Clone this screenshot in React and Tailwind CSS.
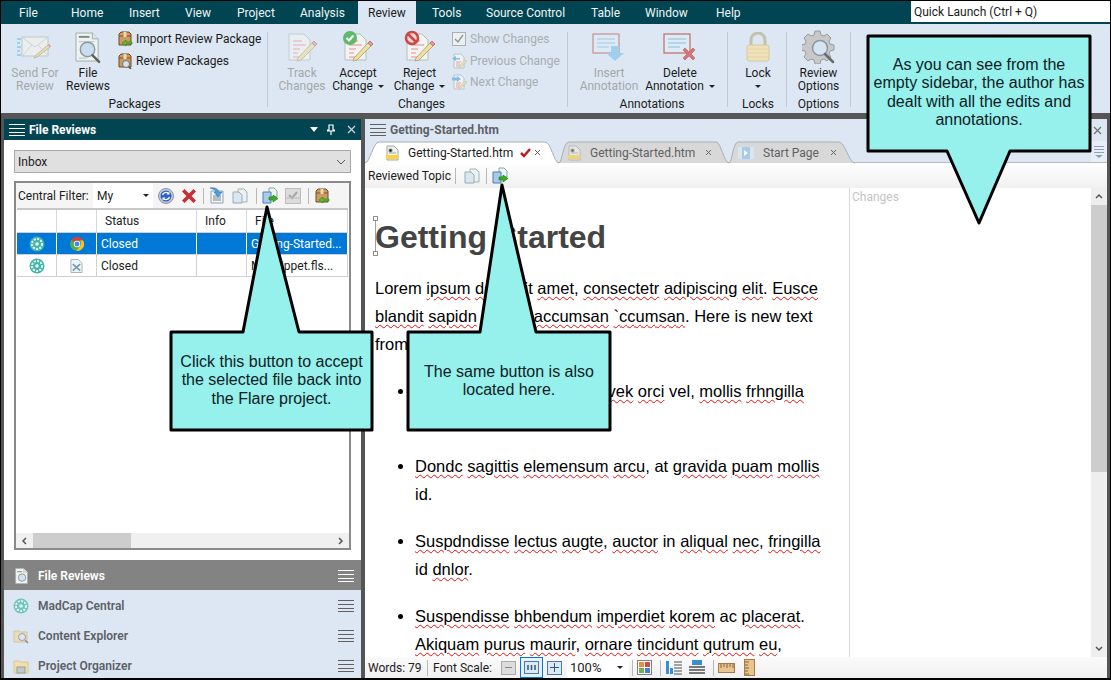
import React from "react";

const Hamburger = ({ color = "#fff", className = "" }) => (
  <svg width="16" height="12" viewBox="0 0 16 12" className={className}>
    <path d="M0 .5h16M0 4.500h16M0 8.500h16M0 11.500h16" stroke={color} strokeWidth="1" />
  </svg>
);

const Envelope = () => (
  <svg width="36" height="30" viewBox="0 0 36 30" className="opacity-80">
    <path d="M0 7h4M0 11h3M0 15h4M0 19h3M0 23h4" stroke="#8ecbee" strokeWidth="2" />
    <rect x="5" y="5" width="26" height="19" fill="#eef2ee" stroke="#b8c0c0" />
    <path d="M5 5l13 10L31 5M5 24l10-11M31 24L21 13" fill="none" stroke="#c8d0d0" />
    <path d="M18 24l13-11 2 2-13 10-3 1z" fill="#eedd9c" stroke="#c0b080" />
    <path d="M31 13l2 2 1-1-2-2z" fill="#e08080" />
  </svg>
);

const PageLines = ({ w = 24, h = 30 }) => (
  <svg width={w} height={h} viewBox="0 0 24 30">
    <path d="M1 1h15l7 7v21H1z" fill="#f2f5f4" stroke="#a8b4b0" />
    <path d="M16 1v7h7" fill="#dce4e2" stroke="#a8b4b0" />
    <path d="M4 7h9" stroke="#808c88" strokeWidth="2" />
    <circle cx="13" cy="18" r="7" fill="#d4e2ee" stroke="#808c88" strokeWidth="1.500" />
  </svg>
);

const FileReviewsIcon = () => (
  <svg width="27" height="33" viewBox="0 0 28 32">
    <path d="M1 1h17l6 6v23H1z" fill="#eef3f1" stroke="#9cacaa" />
    <path d="M18 1v6h6" fill="#dfe6e4" stroke="#9cacaa" />
    <path d="M4 5h11" stroke="#7c8a88" strokeWidth="2" />
    <path d="M4 10h16M4 27h8" stroke="#b4c0be" />
    <circle cx="13" cy="18" r="7.500" fill="#c8dcf2" stroke="#8c9a9c" strokeWidth="1.500" />
    <path d="M18 24l7 7" stroke="#5e5e5e" strokeWidth="2.500" strokeLinecap="round" />
  </svg>
);

const PackageIcon = ({ mode = "import" }) => (
  <svg width="16" height="16" viewBox="0 0 16 16">
    <path d="M2 3l2-2h8l2 2v11H2z" fill="#cd9a62" stroke="#6e4a28" />
    <path d="M2 5h12" stroke="#7e5630" />
    <rect x="6.500" y="1" width="3" height="5" fill="#f0d8a8" />
    {mode === "import" ? (
      <path d="M15 11H9V9l-4 3 4 3v-2h6z" fill="#58c030" stroke="#2d8018" strokeWidth=".6" />
    ) : (
      <>
        <circle cx="9" cy="11" r="3.500" fill="#d4e2ee" stroke="#707070" />
        <path d="M12 14l2 2" stroke="#444" strokeWidth="1.500" />
      </>
    )}
  </svg>
);

// the page-with-pencil that all the Changes buttons share
const EditPage = ({ badge }) => (
  <svg width="34" height="34" viewBox="0 0 34 34">
    <path d="M4 4h15l6 6v20H4z" fill="#f1f4f2" stroke="#b4bebc" />
    <path d="M8 11h9M8 15h13M8 19h7M8 23h5M8 27h6" stroke="#ee8a88" />
    <path d="M13 28l14-15 3 3-14 14-4 1z" fill="#f0e0a0" stroke="#b8aa78" />
    <path d="M27 13l2-2 3 3-2 2z" fill="#e79a98" stroke="#b87a78" />
    {badge === "ok" && (
      <>
        <circle cx="9" cy="8" r="7" fill="#5cba6a" />
        <path d="M5.500 8l2.500 2.500 4.500-5" fill="none" stroke="#fff" strokeWidth="2" />
      </>
    )}
    {badge === "no" && (
      <>
        <circle cx="9" cy="8" r="6" fill="#f4d4d0" stroke="#c84a48" strokeWidth="2.500" />
        <path d="M5 4l8 8" stroke="#c84a48" strokeWidth="2.500" />
      </>
    )}
  </svg>
);

const SmallEdit = ({ arrow }) => (
  <svg width="16" height="16" viewBox="0 0 16 16">
    <path d="M3 1h7l3 3v11H3z" fill="#f2f4f4" stroke="#b8c0c0" />
    <path d="M5 9h5M5 11h4M5 13h3" stroke="#e99" />
    <path d="M8 13l6-6 2 1-6 6-2 1z" fill="#ecdca0" stroke="#bba" strokeWidth=".5" />
    {arrow === "left" ? (
      <path d="M9 5H5V3L1 5.500 5 8V6.500h4z" fill="#7ab8ec" />
    ) : (
      <path d="M1 3.500h5V2l4 3-4 3V6.500H1z" fill="#7ab8ec" />
    )}
  </svg>
);

const AnnotationIcon = ({ del }) => (
  <svg width="34" height="30" viewBox="0 0 34 30">
    <rect x="1" y="2" width="26" height="19" fill="#dcecf6" stroke="#c06a6a" strokeWidth="1.200" />
    <path d="M5 7h18M5 11h18M5 15h12" stroke="#90bcd8" />
    {del ? (
      <path d="M20 18l2-2 4 4 4-4 2 2-4 4 4 4-2 2-4-4-4 4-2-2 4-4z" fill="#d87478" stroke="#b85a5a" strokeWidth=".6" />
    ) : (
      <path d="M19 14h8v7h5l-9 8-9-8h5z" fill="#86c4ec" />
    )}
  </svg>
);

const LockIcon = () => (
  <svg width="24" height="30" viewBox="0 0 24 30">
    <path d="M5 13V8a7 7 0 0 1 14 0v5" fill="none" stroke="#c4c0ae" strokeWidth="3" />
    <rect x="1" y="13" width="22" height="16" rx="2" fill="#f0e2b8" stroke="#d6c89c" />
    <path d="M2 17h20M2 21h20M2 25h20" stroke="#e2d4a6" />
  </svg>
);

const GearIcon = () => (
  <svg width="34" height="34" viewBox="0 0 34 34">
    <path d="M13 1h5l1 4 3 1 3-2 4 4-2 3 1 3 4 1v5l-4 1-1 3 2 3-4 4-3-2-3 1-1 4h-5l-1-4-3-1-3 2-4-4 2-3-1-3-4-1v-5l4-1 1-3-2-3 4-4 3 2 3-1z" fill="#c8c8c8" stroke="#9a9a9a" />
    <circle cx="18" cy="18" r="7.500" fill="#d6e4f2" stroke="#8a96a2" strokeWidth="1.500" />
    <path d="M23 24l8 8" stroke="#6a6a6a" strokeWidth="2.500" strokeLinecap="round" />
  </svg>
);

const CentralIcon = ({ dim }) => (
  <svg width="16" height="16" viewBox="0 0 16 16" className={dim ? "opacity-70" : ""}>
    <circle cx="8" cy="8" r="7.500" fill="#45b5a8" />
    <circle cx="8" cy="8" r="5" fill="none" stroke="#e8fbf6" strokeWidth="2" strokeDasharray="2 1.300" />
    <circle cx="8" cy="8" r="1.800" fill="#e8fbf6" />
  </svg>
);

const ChromeIcon = () => (
  <svg width="14" height="14" viewBox="0 0 14 14">
    <circle cx="7" cy="7" r="7" fill="#4caf50" />
    <path d="M7 0a7 7 0 0 1 6.100 3.500H7a3.500 3.500 0 0 0-3.200 2L1.800 2.300A7 7 0 0 1 7 0z" fill="#e53935" />
    <path d="M13.100 3.500A7 7 0 0 1 6.500 14l3.500-5a3.500 3.500 0 0 0 0-5.500z" fill="#fbc02d" />
    <circle cx="7" cy="7" r="3.200" fill="#fff" />
    <circle cx="7" cy="7" r="2.400" fill="#4285f4" />
  </svg>
);

const SnippetIcon = () => (
  <svg width="13" height="16" viewBox="0 0 14 16">
    <path d="M1 1h8l4 4v10H1z" fill="#eef3f4" stroke="#a4b0b4" />
    <path d="M3 6l8 7M11 6l-8 7" stroke="#6c9ab0" strokeWidth="1.600" />
  </svg>
);

const CopyDocs = ({ dim }) => (
  <svg width="16" height="16" viewBox="0 0 16 16" className={dim ? "opacity-70" : ""}>
    <path d="M6 1h6l3 3v10H6z" fill="#e8f0f2" stroke="#7f979e" />
    <path d="M1 4h6l3 3v8H1z" fill="#d0e2ee" stroke="#6f8e9e" />
  </svg>
);

const AcceptFile = () => (
  <svg width="17" height="17" viewBox="0 0 17 17">
    <path d="M7 1h5l3 3v6H7z" fill="#eef3f4" stroke="#8ea4aa" />
    <path d="M1 5h8v11H1z" fill="#a8cbea" stroke="#4f7eaa" />
    <path d="M7 10h4V8l5 3.500-5 3.500v-2H7z" fill="#38b020" stroke="#1e7a10" strokeWidth=".6" />
  </svg>
);

const Refresh = () => (
  <svg width="16" height="16" viewBox="0 0 16 16">
    <circle cx="8" cy="8" r="7.500" fill="#c8ccd4" stroke="#8c90a0" />
    <circle cx="8" cy="8" r="5.500" fill="#2a62c8" />
    <path d="M4.500 7a3.600 3.600 0 0 1 6-1.500M11.500 9a3.600 3.600 0 0 1-6 1.500" fill="none" stroke="#fff" strokeWidth="1.300" />
    <path d="M11.500 3.500v3h-3zM4.500 12.500v-3h3z" fill="#fff" />
  </svg>
);

const RedX = () => (
  <svg width="14" height="14" viewBox="0 0 14 14">
    <path d="M2.500 0L7 4.500 11.500 0 14 2.500 9.500 7 14 11.500 11.500 14 7 9.500 2.500 14 0 11.500 4.500 7 0 2.500z" fill="#c42e34" />
  </svg>
);

const DownloadDoc = () => (
  <svg width="16" height="17" viewBox="0 0 16 17">
    <path d="M2 4h12v12H2z" fill="#eef3f4" stroke="#8ea4aa" />
    <path d="M4 9h8M4 11h8M4 13h8" stroke="#7c8c92" />
    <path d="M1 1c5-1 8 1 9 4h3l-4 5-4-5h2C7 3 4 2 1 1z" fill="#4f9ade" stroke="#2d6ea8" strokeWidth=".5" />
  </svg>
);

const DisabledCheck = () => (
  <svg width="16" height="16" viewBox="0 0 16 16">
    <rect x=".5" y=".5" width="15" height="15" fill="#dcdcdc" stroke="#bcbcbc" />
    <path d="M4 7l3 3 5-6" fill="none" stroke="#a8a8a8" strokeWidth="2" />
    <path d="M1 10h14" stroke="#bcbcbc" />
  </svg>
);

const TopicIcon = ({ dim }) => (
  <svg width="13" height="16" viewBox="0 0 13 16" className={dim ? "opacity-60" : ""}>
    <path d="M1 1h7l4 4v10H1z" fill="#f0f2f0" stroke="#a0aaa8" />
    <path d="M3 4h3v3H3zM3 8h7" stroke="#a0aaa8" />
    <rect x="0" y="10" width="12" height="4" fill="#fbd23c" />
  </svg>
);

const StartPageIcon = () => (
  <svg width="16" height="12" viewBox="0 0 16 12">
    <rect width="16" height="12" fill="#a6cbe8" />
    <rect x="0" width="4" height="12" fill="#d8e6f2" />
    <rect x="12" width="4" height="12" fill="#d8e6f2" />
    <path d="M6 3l4 3-4 3z" fill="#fff" />
  </svg>
);

const Explorer = () => (
  <svg width="16" height="16" viewBox="0 0 16 16">
    <path d="M1 3h5l1 1h7v10H1z" fill="#ecdcb8" stroke="#d2c4a0" />
    <circle cx="9" cy="9" r="3.500" fill="#dde7f3" stroke="#a0a0a0" />
    <path d="M12 12l3 3" stroke="#909090" strokeWidth="1.500" />
  </svg>
);

const Organizer = () => (
  <svg width="16" height="16" viewBox="0 0 16 16">
    <path d="M1 3h5l1 1h8v11H1z" fill="#f0dfb0" stroke="#d8c890" />
    <rect x="4" y="9" width="8" height="6" fill="#c4c8c8" stroke="#989c9c" />
  </svg>
);

const TabClose = ({ className = "" }) => (
  <svg width="7" height="7" viewBox="0 0 7 7" className={className}><path d="M1 1l5 5M6 1L1 6" stroke="#666" /></svg>
);

const Wv = ({ children }) => (
  <span className="underline decoration-wavy decoration-[#e81010] decoration-1 underline-offset-2">{children}</span>
);

const Dropdown = ({ className = "" }) => <span className={`inline-block h-0 w-0 border-x-[3px] border-t-[3px] border-x-transparent border-t-[#222] ${className}`} />;

function RibbonButton({ icon, lines, width, disabled, caret }) {
  return (
    <div className={`flex shrink-0 flex-col items-center ${width} ${disabled ? "text-[#a3a7ab]" : "text-[#1c1c1c]"}`}>
      <div className="flex h-[43px] items-center justify-center pt-[3px]">{icon}</div>
      {lines.map((line, i) => (
        <div key={i} className="h-[13px] whitespace-nowrap leading-[13px]">
          {line}
          {caret && i === lines.length - 1 && <Dropdown className={line ? "ml-[5px] align-middle" : "align-middle"} />}
        </div>
      ))}
    </div>
  );
}

function RibbonGroup({ label, className = "", children }) {
  return (
    <div className={`flex shrink-0 flex-col ${className}`}>
      <div className="flex h-[69px]">{children}</div>
      <div className="mt-[3px] text-center leading-[16px] text-[#1c1c1c]">{label}</div>
    </div>
  );
}

const RibbonSep = () => <div className="my-[8px] h-[75px] w-px shrink-0 bg-[#bfcad6]" />;
const ToolSep = ({ className = "" }) => <div className={`h-[16px] w-px shrink-0 bg-[#b8b8b8] ${className}`} />;

function SmallAction({ icon, label, disabled }) {
  return (
    <div className={`flex h-[22px] items-center gap-[3px] whitespace-nowrap ${disabled ? "text-[#a3a7ab]" : "text-[#1c1c1c]"}`}>
      <div className="flex w-[16px] justify-center">{icon}</div>
      <span>{label}</span>
    </div>
  );
}

function Callout({ box, path, className, children }) {
  return (
    <div className={`absolute ${box}`}>
      <svg className="absolute left-0 top-0 overflow-visible" width="10" height="10">
        <path d={path} fill="#96f0ec" stroke="#000" strokeWidth="3" strokeLinejoin="round" />
      </svg>
      <div className={`relative flex h-full flex-col items-center text-center font-['Liberation_Sans',sans-serif] text-[16px] leading-[18.4px] text-[#0c1c24] ${className}`}>
        {children}
      </div>
    </div>
  );
}

function GridRow({ selected, icon, status, file }) {
  const cell = `flex items-center border-r ${selected ? "border-white bg-[#0078d7] text-white" : "border-[#d0d0d0] bg-white text-[#1c1c1c]"}`;
  return (
    <div className="flex h-[22px] border-b border-[#d0d0d0]">
      <div className={`${cell} w-[40px] justify-center`}><CentralIcon /></div>
      <div className={`${cell} w-[40px] justify-center`}>{icon}</div>
      <div className={`${cell} w-[100px] pl-[4px]`}>{status}</div>
      <div className={`${cell} w-[50px]`} />
      <div className={`${cell} w-[101px] whitespace-nowrap pl-[4px]`}>{file}</div>
    </div>
  );
}

function NavRow({ icon, label, active }) {
  return (
    <div className={`flex h-[30px] shrink-0 items-center pl-[9px] pr-[7px] pt-[1px] font-semibold ${active ? "bg-[#838383] text-white" : "text-[#5c5f66]"}`}>
      <div className="flex w-[16px] justify-center">{icon}</div>
      <span className="ml-[9px] flex-1">{label}</span>
      <Hamburger color={active ? "#fff" : "#606060"} />
    </div>
  );
}

function DocTab({ shape, fill, icon, label, extra, active, className }) {
  return (
    <div className={`relative flex h-[22px] shrink-0 items-center pt-[1px] ${active ? "text-[#1c1c1c]" : "text-[#606060]"} ${className}`}>
      <svg className="absolute left-0 top-0 overflow-visible" width="10" height="22">
        <path d={shape} fill={fill} stroke="#a8aeb4" />
      </svg>
      <div className="relative flex items-center whitespace-nowrap">
        {icon}
        <span className="ml-[9px]">{label}</span>
        {extra}
      </div>
    </div>
  );
}

export default function App() {
  const tabs = [
    ["File", "ml-[18px] w-[52px]"],
    ["Home", "w-[58px]"],
    ["Insert", "w-[56px]"],
    ["View", "w-[52px]"],
    ["Project", "w-[63px]"],
    ["Analysis", "w-[58px]"],
  ];
  const tabsAfter = [
    ["Tools", "ml-[16px] w-[54px]"],
    ["Source Control", "w-[105px]"],
    ["Table", "w-[54px]"],
    ["Window", "w-[71px]"],
    ["Help", "w-[50px]"],
  ];

  return (
    <div className="relative flex h-[680px] w-[1111px] flex-col overflow-hidden border border-b-2 border-black bg-[#555555] font-['Roboto',sans-serif] text-[12px]">
      {/* menu tabs */}
      <div className="flex h-[23px] shrink-0 items-center bg-[#024552] text-[#eef4f6]">
        {tabs.map(([t, c]) => <div key={t} className={c}>{t}</div>)}
        <div className="flex h-full w-[58px] items-center justify-center bg-[#dde7f3] text-[#1c1c1c]">Review</div>
        {tabsAfter.map(([t, c]) => <div key={t} className={c}>{t}</div>)}
        <div className="ml-auto mb-[2px] flex h-[21px] w-[199px] items-center bg-white pl-[3px] text-[#1c1c1c]">Quick Launch (Ctrl + Q)</div>
      </div>

      {/* ribbon */}
      <div className="flex h-[89px] shrink-0 bg-[#dde7f3] pl-[5px]">
        <RibbonGroup label="Packages" className="w-[257px]">
          <RibbonButton width="w-[58px]" disabled icon={<Envelope />} lines={["Send For", "Review"]} />
          <RibbonButton width="w-[48px]" icon={<FileReviewsIcon />} lines={["File", "Reviews"]} />
          <div className="ml-[5px] mt-[4px] flex flex-col">
            <SmallAction icon={<PackageIcon />} label="Import Review Package" />
            <SmallAction icon={<PackageIcon mode="review" />} label="Review Packages" />
          </div>
        </RibbonGroup>
        <div className="ml-[4px]"><RibbonSep /></div>
        <RibbonGroup label="Changes" className="ml-[8px] w-[291px]">
          <RibbonButton width="w-[52px]" disabled icon={<div className="opacity-60"><EditPage /></div>} lines={["Track", "Changes"]} />
          <RibbonButton width="w-[60px]" icon={<EditPage badge="ok" />} lines={["Accept", "Change"]} caret />
          <RibbonButton width="w-[63px]" icon={<EditPage badge="no" />} lines={["Reject", "Change"]} caret />
          <div className="mt-[4px] flex flex-col opacity-90">
            <SmallAction disabled label="Show Changes" icon={
              <svg width="14" height="14" viewBox="0 0 14 14"><rect x=".5" y=".5" width="13" height="13" fill="#eef1f4" stroke="#a8a8a8" /><path d="M3 7l3 3 5-7" fill="none" stroke="#888" strokeWidth="1.300" /></svg>
            } />
            <SmallAction disabled label="Previous Change" icon={<SmallEdit arrow="left" />} />
            <SmallAction disabled label="Next Change" icon={<SmallEdit arrow="right" />} />
          </div>
        </RibbonGroup>
        <RibbonSep />
        <RibbonGroup label="Annotations" className="ml-[9px] w-[150px]">
          <RibbonButton width="w-[64px]" disabled icon={<div className="opacity-70"><AnnotationIcon /></div>} lines={["Insert", "Annotation"]} />
          <RibbonButton width="w-[78px]" icon={<AnnotationIcon del />} lines={["Delete", "Annotation"]} caret />
        </RibbonGroup>
        <RibbonSep />
        <RibbonGroup label="Locks" className="w-[58px] pl-[2px]">
          <RibbonButton width="w-[56px]" icon={<LockIcon />} lines={["Lock", ""]} caret />
        </RibbonGroup>
        <RibbonSep />
        <RibbonGroup label="Options" className="w-[63px]">
          <RibbonButton width="w-[63px]" icon={<GearIcon />} lines={["Review", "Options"]} />
        </RibbonGroup>
        <RibbonSep />
      </div>

      {/* panels */}
      <div className="flex min-h-0 flex-1 gap-[4px] pl-[3px] pr-[3px] pt-[6px]">
        {/* left panel */}
        <div className="flex w-[357px] shrink-0 flex-col overflow-hidden bg-white">
          <div className="flex h-[21px] shrink-0 items-center bg-[#024552] pl-[5px] pr-[5px] font-bold text-white">
            <Hamburger />
            <span className="ml-[4px] flex-1 text-[12px]">File Reviews</span>
            <span className="h-0 w-0 border-x-[4px] border-t-[5px] border-x-transparent border-t-white" />
            <svg width="8" height="11" viewBox="0 0 8 11" className="ml-[9px]"><path d="M2 1h4v5h1.500v1h-7V6H2zM4 7v4" fill="none" stroke="#fff" strokeWidth="1.200" /></svg>
            <svg width="9" height="9" viewBox="0 0 9 9" className="ml-[12px]"><path d="M1 1l7 7M8 1L1 8" stroke="#c8d4d8" strokeWidth="1.300" /></svg>
          </div>

          <div className="flex h-[420px] shrink-0 flex-col px-[10px] pb-[10px] pt-[10px]">
            <div className="flex h-[23px] shrink-0 items-center justify-between border border-[#a8a8a8] bg-[#e0e0e0] pl-[3px] pr-[4px] text-[#1c1c1c]">
              Inbox
              <svg width="10" height="6" viewBox="0 0 10 6"><path d="M1 1l4 4 4-4" fill="none" stroke="#555" /></svg>
            </div>

            <div className="mt-[8px] flex min-h-0 flex-1 flex-col border-2 border-[#8a8a8a]">
              <div className="flex h-[25px] shrink-0 items-center bg-[#f5f5f5] pl-[2px] text-[#1c1c1c]">
                <span className="w-[75px] whitespace-nowrap">Central Filter:</span>
                <div className="flex h-[25px] w-[60px] items-center justify-between bg-white pl-[4px] pr-[4px]">My<Dropdown /></div>
                <div className="ml-[5px]"><Refresh /></div>
                <div className="ml-[8px]"><RedX /></div>
                <ToolSep className="ml-[7px]" />
                <div className="ml-[5px]"><DownloadDoc /></div>
                <div className="ml-[7px]"><CopyDocs dim /></div>
                <ToolSep className="ml-[8px]" />
                <div className="ml-[5px]"><AcceptFile /></div>
                <div className="ml-[6px]"><DisabledCheck /></div>
                <ToolSep className="ml-[7px]" />
                <div className="ml-[5px]"><PackageIcon /></div>
              </div>
              <div className="mx-[1px] min-h-0 flex-1 border-t-2 border-[#c8c8c8]">
                <div className="flex h-[23px] border-b border-[#d0d0d0] text-[#1c1c1c]">
                  <div className="w-[40px] border-r border-[#d8d8d8]" />
                  <div className="w-[40px] border-r border-[#d8d8d8]" />
                  <div className="flex w-[100px] items-center border-r border-[#d8d8d8] pl-[8px]">Status</div>
                  <div className="flex w-[50px] items-center border-r border-[#d8d8d8] pl-[8px]">Info</div>
                  <div className="flex w-[101px] items-center border-r border-[#d8d8d8] pl-[8px]">File</div>
                </div>
                <GridRow selected icon={<ChromeIcon />} status="Closed" file="Getting-Started..." />
                <GridRow icon={<SnippetIcon />} status="Closed" file="MySnippet.fls..." />
              </div>
              <div className="flex h-[15px] shrink-0 items-center bg-[#f0f0f0] px-[5px]">
                <svg width="6" height="8" viewBox="0 0 6 8"><path d="M5 1L2 4l3 3" fill="none" stroke="#555" strokeWidth="1.500" /></svg>
                <div className="ml-[6px] h-full w-[98px] bg-[#cdcdcd]" />
                <svg width="6" height="8" viewBox="0 0 6 8" className="ml-auto"><path d="M1 1l3 3-3 3" fill="none" stroke="#555" strokeWidth="1.500" /></svg>
              </div>
            </div>
          </div>

          <div className="shrink-0 bg-[#dde7f3]">
            <NavRow active label="File Reviews" icon={<PageLines w={13} h={16} />} />
            <NavRow label="MadCap Central" icon={<CentralIcon dim />} />
            <NavRow label="Content Explorer" icon={<Explorer />} />
            <NavRow label="Project Organizer" icon={<Organizer />} />
          </div>
        </div>

        {/* right panel */}
        <div className="flex min-w-0 flex-1 flex-col bg-white">
          <div className="flex h-[22px] shrink-0 items-center bg-[#dde7f3] pl-[5px] font-bold text-[#5c5f66]">
            <Hamburger color="#606060" />
            <span className="ml-[4px]">Getting-Started.htm</span>
            <svg width="9" height="9" viewBox="0 0 9 9" className="ml-auto mr-[5px]"><path d="M1 1l7 7M8 1L1 8" stroke="#707070" strokeWidth="1.200" /></svg>
          </div>
          <div className="flex h-[22px] shrink-0 border-b border-[#b8bcc0] bg-[#dde7f3]">
            <DocTab active className="w-[194px] pl-[21px]" fill="#fff"
              shape="M0 22C5 22 8 1 14 1H180C186 1 189 22 194 22"
              icon={<TopicIcon />} label="Getting-Started.htm"
              extra={<>
                <svg width="11" height="10" viewBox="0 0 11 10" className="ml-[7px]"><path d="M1 5l3 3 6-7" fill="none" stroke="#b81c24" strokeWidth="2.500" /></svg>
                <TabClose className="ml-[3px]" />
              </>} />
            <DocTab className="w-[170px] pl-[9px]" fill="#d8d8d8"
              shape="M0 22C3 22 4 1 10 1H157C162 1 165 22 170 22"
              icon={<TopicIcon dim />} label="Getting-Started.htm"
              extra={<TabClose className="ml-[10px]" />} />
            <DocTab className="w-[126px] pl-[9px]" fill="#d8d8d8"
              shape="M0 22C3 22 4 1 9 1H110C116 1 120 22 126 22"
              icon={<StartPageIcon />} label="Start Page"
              extra={<TabClose className="ml-[11px]" />} />
            <div className="ml-auto flex w-[16px] flex-col items-center justify-center gap-[2px] bg-[#e8eef6]">
              <div className="h-px w-[10px] bg-[#8ca0b8]" />
              <div className="h-px w-[10px] bg-[#8ca0b8]" />
              <div className="h-px w-[10px] bg-[#8ca0b8]" />
              <div className="h-0 w-0 border-x-[4px] border-t-[3px] border-x-transparent border-t-[#8ca0b8]" />
            </div>
          </div>
          <div className="flex h-[25px] shrink-0 items-center bg-gradient-to-b from-white to-[#f0f0f0] pl-[3px] text-[#1c1c1c]">
            <span className="w-[82px] shrink-0 whitespace-nowrap">Reviewed Topic</span>
            <ToolSep className="ml-[5px]" />
            <div className="ml-[8px]"><CopyDocs dim /></div>
            <ToolSep className="ml-[6px]" />
            <div className="ml-[5px]"><AcceptFile /></div>
          </div>

          <div className="flex min-h-0 flex-1">
            <div className="w-[485px] shrink-0 overflow-hidden border-r border-[#d8d8d8] pl-[10px] pr-[15px] pt-[28px] font-['Liberation_Sans',sans-serif] text-[16.5px] leading-[28px] text-black">
              <h1 className="relative mb-[16px] text-[32px] font-bold leading-[42px] text-[#444444]">
                <span className="absolute left-0 top-[2px] h-[36px] w-px bg-[#a0a0a0]" />
                <span className="absolute left-[-2px] top-0 h-[5px] w-[5px] border border-[#909090] bg-white" />
                <span className="absolute bottom-[2px] left-[-2px] h-[5px] w-[5px] border border-[#909090] bg-white" />
                Getting Started
              </h1>
              <p>
                Lorem <Wv>ipsum</Wv> <Wv>dolor</Wv> sit <Wv>amet</Wv>, <Wv>consectetr</Wv> <Wv>adipiscing</Wv> <Wv>elit</Wv>. <Wv>Eusce</Wv>{" "}
                <Wv>blandit</Wv> <Wv>sapidn</Wv> sed sit <Wv>accumsan</Wv> <Wv>`ccumsan</Wv>. Here is new text from Lorem.
              </p>
              <ul className="mt-[19px] list-disc pl-[40px]">
                <li className="mb-[19px]">Curabitur finibus lorem ac <Wv>vek</Wv> <Wv>orci</Wv> vel, <Wv>mollis</Wv> <Wv>frhngilla</Wv><br />nisi.</li>
                <li className="mb-[19px]"><Wv>Dondc</Wv> <Wv>sagittis</Wv> <Wv>elemensum</Wv> <Wv>arcu</Wv>, at <Wv>gravida</Wv> <Wv>puam</Wv> <Wv>mollis</Wv> id.</li>
                <li className="mb-[19px]"><Wv>Suspdndisse</Wv> <Wv>lectus</Wv> <Wv>augte</Wv>, <Wv>auctor</Wv> in <Wv>aliqual</Wv> <Wv>nec</Wv>, <Wv>fringilla</Wv> id <Wv>dnlor</Wv>.</li>
                <li><Wv>Suspendisse</Wv> <Wv>bhbendum</Wv> <Wv>imperdiet</Wv> <Wv>korem</Wv> ac <Wv>placerat</Wv>. <Wv>Akiquam</Wv> <Wv>purus</Wv> <Wv>maurir</Wv>, <Wv>ornare</Wv> <Wv>tincidunt</Wv> <Wv>qutrum</Wv> <Wv>eu</Wv>,</li>
              </ul>
            </div>
            <div className="flex-1 pl-[2px] pt-[2px] text-[12px] leading-[14px] text-[#c4c4c4]">Changes</div>
            <div className="flex w-[16px] shrink-0 flex-col items-center bg-[#eeeeee]">
              <svg width="8" height="6" viewBox="0 0 8 6" className="my-[5px]"><path d="M1 5l3-3 3 3" fill="none" stroke="#555" strokeWidth="1.500" /></svg>
              <div className="mt-[1px] h-[267px] w-full bg-[#cdcdcd]" />
              <svg width="8" height="6" viewBox="0 0 8 6" className="mb-[5px] mt-auto"><path d="M1 1l3 3 3-3" fill="none" stroke="#555" strokeWidth="1.500" /></svg>
            </div>
          </div>

          <div className="flex h-[21px] shrink-0 items-center whitespace-nowrap bg-gradient-to-b from-[#fafafa] to-[#f0f0f0] pl-[3px] text-[#1c1c1c]">
            <span className="w-[52px] shrink-0">Words: 79</span>
            <ToolSep className="ml-[7px]" />
            <span className="ml-[5px] w-[56px] shrink-0">Font Scale:</span>
            <div className="ml-[12px] flex h-[14px] w-[15px] items-center justify-center border border-[#a8a8a8] bg-[#dcdcdc] text-[#888]">
              <div className="h-px w-[7px] bg-[#888]" />
            </div>
            <div className="ml-[4px] flex h-[21px] w-[23px] items-center justify-center border border-[#0078d7] bg-[#e8f2fb]">
              <svg width="15" height="13" viewBox="0 0 15 13"><rect x=".5" y=".5" width="14" height="12" fill="#dce8f2" stroke="#4a78a8" /><path d="M4 4v5M7.500 4v5M11 4v5" stroke="#2a5888" strokeWidth="1.500" /></svg>
            </div>
            <div className="ml-[4px] flex h-[14px] w-[15px] items-center justify-center border border-[#4a78a8] bg-[#dce8f2]">
              <svg width="9" height="9" viewBox="0 0 9 9"><path d="M4.500 0v9M0 4.500h9" stroke="#2a5888" /></svg>
            </div>
            <div className="ml-[5px] flex h-[21px] w-[62px] items-center justify-between bg-white pl-[3px] pr-[6px] text-[13px]">100%<Dropdown /></div>
            <ToolSep className="ml-[3px]" />
            <svg width="15" height="15" viewBox="0 0 15 15" className="ml-[4px]"><rect x=".5" y=".5" width="14" height="14" fill="#fff" stroke="#808080" /><rect x="2" y="2" width="5" height="5" fill="#e89040" /><rect x="8" y="2" width="5" height="5" fill="#d04848" /><rect x="2" y="8" width="5" height="5" fill="#70b050" /><rect x="8" y="8" width="5" height="5" fill="#4880d0" /></svg>
            <ToolSep className="ml-[8px]" />
            <svg width="16" height="15" viewBox="0 0 16 15" className="ml-[5px]"><rect x="0" y="1" width="3" height="13" fill="#3a8fd0" /><rect x="4" y="8" width="3" height="6" fill="#3a8fd0" /><path d="M8 2h8M8 5h8M8 8h8M8 11h8M8 14h8" stroke="#505050" /></svg>
            <svg width="16" height="15" viewBox="0 0 16 15" className="ml-[7px]"><rect x="3" y="0" width="10" height="5" fill="#3a8fd0" /><path d="M0 7h16M0 10h16M0 13h16" stroke="#505050" strokeWidth="1.500" /></svg>
            <ToolSep className="ml-[8px]" />
            <svg width="17" height="10" viewBox="0 0 17 10" className="ml-[4px]"><rect x=".5" y=".5" width="16" height="9" fill="#e8c48e" stroke="#a87c44" /><path d="M3 1v4M6 1v3M9 1v4M12 1v3M15 1v4" stroke="#886030" /></svg>
            <svg width="11" height="17" viewBox="0 0 11 17" className="ml-[9px]"><rect x=".5" y=".5" width="10" height="16" fill="#e8c48e" stroke="#a87c44" /><path d="M1 3h4M1 6h3M1 9h4M1 12h3M1 15h4" stroke="#886030" /></svg>
          </div>
        </div>
      </div>

      {/* callouts on top of the screen */}
      <Callout box="left-[170px] top-[331px] h-[98px] w-[201px]" className="pt-[21px]"
        path="M0 0H72L96 -125L128 0H201V98H0Z">
        <div>Click this button to accept</div>
        <div>the selected file back into</div>
        <div>the Flare project.</div>
      </Callout>
      <Callout box="left-[407px] top-[331px] h-[98px] w-[202px]" className="pt-[31px]"
        path="M0 0H72L94 -147L128 0H202V98H0Z">
        <div>The same button is also</div>
        <div>located here.</div>
      </Callout>
      <Callout box="left-[867px] top-[35px] h-[115px] w-[222px]" className="pt-[20px]"
        path="M0 0H222V115H142L111 187L79 115H0Z">
        <div>As you can see from the</div>
        <div>empty sidebar, the author has</div>
        <div>dealt with all the edits and</div>
        <div>annotations.</div>
      </Callout>
    </div>
  );
}
